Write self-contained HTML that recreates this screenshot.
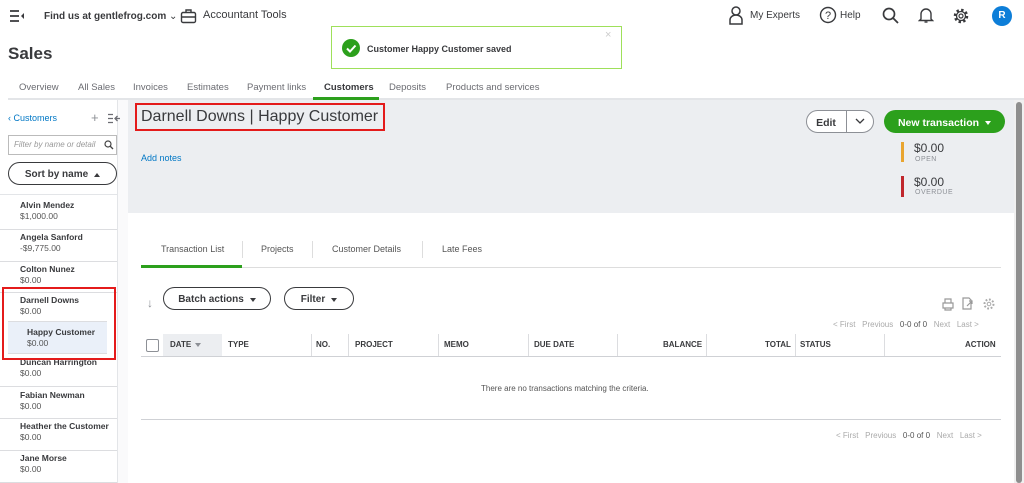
<!DOCTYPE html><html><head><meta charset="utf-8"><style>
*{box-sizing:border-box;margin:0;padding:0}
body{width:1024px;height:483px;overflow:hidden;background:#fff;font-family:"Liberation Sans",sans-serif;color:#393a3d;position:relative}
.a{position:absolute;white-space:nowrap}
.th{position:absolute;top:334px;height:22px;font-size:8px;font-weight:bold;line-height:22px;color:#393a3d}
.sep{position:absolute;top:334px;height:22px;width:1px;background:#dcdde0}
.c{position:absolute;left:0;width:117px;border-bottom:1px solid #dcdde0;font-size:8.5px;line-height:11px;padding:2px 0 0 20px}
.c b{display:block;color:#393a3d}
.c span{color:#555}
.pg{font-size:8px;color:#aaa}
.btn{display:flex;align-items:center;justify-content:center;line-height:12px;padding-top:2px}
.dn{display:inline-block;width:0;height:0;border-left:3.5px solid transparent;border-right:3.5px solid transparent;border-top:4px solid currentColor;margin-left:6px}
.up{display:inline-block;width:0;height:0;border-left:3.5px solid transparent;border-right:3.5px solid transparent;border-bottom:4px solid currentColor;margin-left:6px}
</style></head><body>
<svg class="a" style="left:9px;top:9px" width="16" height="14"><path d="M1 2h9M1 7h9M1 12h9" stroke="#393a3d" stroke-width="1.8"/><path d="M15 4l-3 3 3 3z" fill="#393a3d"/></svg>
<div class="a" style="left:44px;top:11px;font-size:10px;font-weight:bold">Find us at gentlefrog.com <span style="font-weight:normal">⌄</span></div>
<svg class="a" style="left:180px;top:8px" width="17" height="16"><rect x="1.5" y="4.5" width="14" height="10" rx="1.5" fill="none" stroke="#393a3d" stroke-width="1.4"/><path d="M6 4.5V2h5v2.5M1.5 9h14" fill="none" stroke="#393a3d" stroke-width="1.4"/></svg>
<div class="a" style="left:203px;top:9px;font-size:11px;color:#393a3d">Accountant Tools</div>
<svg class="a" style="left:729px;top:6px" width="14" height="19"><circle cx="7" cy="5" r="4" fill="none" stroke="#393a3d" stroke-width="1.5"/><path d="M1 18v-4a6 5 0 0112 0v4z" fill="none" stroke="#393a3d" stroke-width="1.5"/></svg>
<div class="a" style="left:750px;top:10px;font-size:10px">My Experts</div>
<svg class="a" style="left:819px;top:6px" width="18" height="18"><circle cx="9" cy="9" r="7.5" fill="none" stroke="#393a3d" stroke-width="1.4"/><text x="9" y="13" text-anchor="middle" font-size="11" font-family="Liberation Sans" fill="#393a3d">?</text></svg>
<div class="a" style="left:840px;top:10px;font-size:10px">Help</div>
<svg class="a" style="left:882px;top:7px" width="18" height="18"><circle cx="7" cy="7" r="5.5" fill="none" stroke="#393a3d" stroke-width="1.7"/><path d="M11 11l5 5" stroke="#393a3d" stroke-width="1.8"/></svg>
<svg class="a" style="left:918px;top:6px" width="16" height="18"><path d="M3 13V8a5 5 0 0110 0v5l1.5 1.5h-13z" fill="none" stroke="#393a3d" stroke-width="1.4"/><path d="M6.5 16h3" stroke="#393a3d" stroke-width="1.4"/></svg>
<svg class="a" style="left:952px;top:7px" width="18" height="18"><circle cx="9" cy="9" r="6" fill="none" stroke="#393a3d" stroke-width="2.5" stroke-dasharray="2.4 2.3"/><circle cx="9" cy="9" r="4.5" fill="none" stroke="#393a3d" stroke-width="1.3"/><circle cx="9" cy="9" r="2" fill="none" stroke="#393a3d" stroke-width="1.2"/></svg>
<div class="a" style="left:992px;top:6px;width:20px;height:20px;border-radius:50%;background:#0d7ed8;color:#fff;font-size:10px;font-weight:bold;text-align:center;line-height:20px">R</div>
<div class="a" style="left:8px;top:44px;font-size:17px;font-weight:bold;color:#393a3d">Sales</div>
<div class="a" style="left:331px;top:26px;width:291px;height:43px;border:1.5px solid #9ee05a;background:#fff"></div>
<div class="a" style="left:342px;top:39px;width:18px;height:18px;border-radius:50%;background:#2ca01c"></div>
<svg class="a" style="left:342px;top:39px" width="18" height="18"><path d="M5 9.5l3 3 5.5-6" fill="none" stroke="#fff" stroke-width="2"/></svg>
<div class="a" style="left:367px;top:44px;font-size:9px;font-weight:bold">Customer Happy Customer saved</div>
<div class="a" style="left:605px;top:29px;font-size:11px;color:#ccc">×</div>
<div class="a" style="top:82px;left:19px;font-size:9.5px;color:#6b6c72">Overview</div>
<div class="a" style="top:82px;left:78px;font-size:9.5px;color:#6b6c72">All Sales</div>
<div class="a" style="top:82px;left:133px;font-size:9.5px;color:#6b6c72">Invoices</div>
<div class="a" style="top:82px;left:187px;font-size:9.5px;color:#6b6c72">Estimates</div>
<div class="a" style="top:82px;left:247px;font-size:9.5px;color:#6b6c72">Payment links</div>
<div class="a" style="top:82px;left:324px;font-size:9.5px;font-weight:bold;color:#393a3d">Customers</div>
<div class="a" style="top:82px;left:389px;font-size:9.5px;color:#6b6c72">Deposits</div>
<div class="a" style="top:82px;left:446px;font-size:9.5px;color:#6b6c72">Products and services</div>
<div class="a" style="top:98px;left:8px;width:1016px;height:2px;background:#e3e5e8"></div>
<div class="a" style="top:97px;left:313px;width:66px;height:3px;background:#2ca01c"></div>
<div class="a" style="left:117px;top:100px;width:11px;height:383px;background:#fafafb;border-left:1px solid #e3e5e8"></div>
<div class="a" style="left:8px;top:113px;font-size:9px;color:#0077c5">‹ Customers</div>
<div class="a" style="left:91px;top:110px;font-size:13px;color:#8d9096">+</div>
<svg class="a" style="left:107px;top:113px" width="14" height="11"><path d="M1 1.5h5M1 5.5h5M1 9.5h5M13 5.5H8M10.5 3l-2.5 2.5 2.5 2.5" fill="none" stroke="#6b6c72" stroke-width="1.3"/></svg>
<div class="a" style="left:8px;top:135px;width:109px;height:20px;border:1px solid #bbb;font-size:8px;font-style:italic;color:#999;line-height:18px;padding-left:5px;overflow:hidden">Filter by name or detail</div>
<svg class="a" style="left:104px;top:140px" width="10" height="10"><circle cx="4" cy="4" r="3" fill="none" stroke="#444" stroke-width="1.2"/><path d="M6 6l3 3" stroke="#444" stroke-width="1.3"/></svg>
<div class="a btn" style="left:8px;top:162px;width:109px;height:23px;border:1.5px solid #393a3d;border-radius:12px;font-size:10px;font-weight:bold">Sort by name<span class="up"></span></div>
<div class="a" style="left:0;top:194px;width:117px;height:1px;background:#e3e5e8"></div>
<div class="c" style="top:198px;height:32px"><b>Alvin Mendez</b><span>$1,000.00</span></div>
<div class="c" style="top:230px;height:32px"><b>Angela Sanford</b><span>-$9,775.00</span></div>
<div class="c" style="top:262px;height:31px"><b>Colton Nunez</b><span>$0.00</span></div>
<div class="c" style="top:293px;height:28px;border-bottom:none"><b>Darnell Downs</b><span>$0.00</span></div>
<div class="a" style="left:8px;top:321px;width:99px;height:33px;background:#eaf0f9;border-top:1px solid #dcdde0;border-bottom:1px solid #dcdde0;font-size:8.5px;line-height:11px;padding:5px 0 0 19px"><b style="display:block">Happy Customer</b><span style="color:#555">$0.00</span></div>
<div class="c" style="top:356px;height:31px;padding-top:1px"><b>Duncan Harrington</b><span>$0.00</span></div>
<div class="c" style="top:388px;height:31px"><b>Fabian Newman</b><span>$0.00</span></div>
<div class="c" style="top:419px;height:32px"><b>Heather the Customer</b><span>$0.00</span></div>
<div class="c" style="top:451px;height:32px"><b>Jane Morse</b><span>$0.00</span></div>
<div class="a" style="left:2px;top:287px;width:114px;height:73px;border:2.5px solid #e41b1b"></div>
<div class="a" style="left:128px;top:100px;width:886px;height:113px;background:#eceef1"></div>
<div class="a" style="left:1014px;top:100px;width:10px;height:383px;background:#f0f0f0"></div>
<div class="a" style="left:1016px;top:102px;width:6px;height:381px;background:#8e8e8e;border-radius:3px"></div>
<div class="a" style="left:135px;top:103px;width:250px;height:28px;border:2.5px solid #e41b1b"></div>
<div class="a" style="left:141px;top:108px;font-size:16px;color:#393a3d">Darnell Downs | Happy Customer</div>
<div class="a" style="left:141px;top:153px;font-size:9px;color:#0077c5">Add notes</div>
<div class="a" style="left:806px;top:110px;width:68px;height:23px;border:1px solid #8d9096;border-radius:12px;background:#fff"></div>
<div class="a" style="left:846px;top:110px;width:1px;height:23px;background:#8d9096"></div>
<div class="a btn" style="left:806px;top:110px;width:40px;height:23px;font-size:10.5px;font-weight:bold">Edit</div>
<svg class="a" style="left:855px;top:118px" width="10" height="7"><path d="M1 1l4 4 4-4" fill="none" stroke="#393a3d" stroke-width="1.3"/></svg>
<div class="a btn" style="left:884px;top:110px;width:121px;height:23px;border-radius:12px;background:#2ca01c;color:#fff;font-size:10.5px;font-weight:bold">New transaction<span class="dn"></span></div>
<div class="a" style="left:901px;top:142px;width:3px;height:20px;background:#e9a530"></div>
<div class="a" style="left:914px;top:141px;font-size:12px">$0.00</div>
<div class="a" style="left:915px;top:156px;font-size:7px;color:#8d9096;letter-spacing:.5px">OPEN</div>
<div class="a" style="left:901px;top:176px;width:3px;height:21px;background:#c0272d"></div>
<div class="a" style="left:914px;top:175px;font-size:12px">$0.00</div>
<div class="a" style="left:915px;top:189px;font-size:7px;color:#8d9096;letter-spacing:.5px">OVERDUE</div>
<div class="a" style="left:161px;top:244px;font-size:9px;color:#555">Transaction List</div>
<div class="a" style="left:242px;top:241px;width:1px;height:17px;background:#ddd"></div>
<div class="a" style="left:261px;top:244px;font-size:9px;color:#555">Projects</div>
<div class="a" style="left:312px;top:241px;width:1px;height:17px;background:#ddd"></div>
<div class="a" style="left:332px;top:244px;font-size:9px;color:#555">Customer Details</div>
<div class="a" style="left:422px;top:241px;width:1px;height:17px;background:#ddd"></div>
<div class="a" style="left:442px;top:244px;font-size:9px;color:#555">Late Fees</div>
<div class="a" style="left:141px;top:267px;width:860px;height:1px;background:#ddd"></div>
<div class="a" style="left:141px;top:265px;width:101px;height:3px;background:#2ca01c"></div>
<div class="a" style="left:147px;top:296px;font-size:12px;color:#8d9096">↓</div>
<div class="a btn" style="left:163px;top:287px;width:108px;height:23px;border:1.5px solid #393a3d;border-radius:12px;font-size:10px;font-weight:bold">Batch actions<span class="dn"></span></div>
<div class="a btn" style="left:284px;top:287px;width:70px;height:23px;border:1.5px solid #393a3d;border-radius:12px;font-size:10px;font-weight:bold">Filter<span class="dn"></span></div>
<svg class="a" style="left:940px;top:297px" width="58" height="14"><path d="M3 6h10v5H3zM5 6V2h6v4M5 11v2h6v-2" fill="none" stroke="#999" stroke-width="1.2"/><path d="M23 1h6l2 2v9H23z" fill="none" stroke="#999" stroke-width="1.2"/><path d="M27 9l5-5M29 4h3v3" fill="none" stroke="#999" stroke-width="1.2"/><circle cx="49" cy="7" r="4.5" fill="none" stroke="#aaa" stroke-width="2" stroke-dasharray="1.8 1.7"/><circle cx="49" cy="7" r="1.8" fill="none" stroke="#aaa"/></svg>
<div class="a pg" style="left:833px;top:320px">&lt; First &nbsp; Previous &nbsp; <span style="color:#555">0-0 of 0</span> &nbsp; Next &nbsp; Last &gt;</div>
<div class="a" style="left:146px;top:339px;width:13px;height:13px;border:1px solid #8d9096;border-radius:2px;background:#fff"></div>
<div class="a" style="left:163px;top:334px;width:59px;height:22px;background:#eceef1"></div>
<div class="th" style="left:170px">DATE<span class="dn" style="color:#8d9096;margin-left:4px;vertical-align:middle"></span></div>
<div class="th" style="left:228px">TYPE</div>
<div class="th" style="left:316px">NO.</div>
<div class="th" style="left:355px">PROJECT</div>
<div class="th" style="left:444px">MEMO</div>
<div class="th" style="left:534px">DUE DATE</div>
<div class="th" style="left:663px">BALANCE</div>
<div class="th" style="left:765px">TOTAL</div>
<div class="th" style="left:800px">STATUS</div>
<div class="th" style="left:965px">ACTION</div>
<div class="sep" style="left:311px"></div><div class="sep" style="left:348px"></div><div class="sep" style="left:438px"></div><div class="sep" style="left:528px"></div><div class="sep" style="left:617px"></div><div class="sep" style="left:706px"></div><div class="sep" style="left:795px"></div><div class="sep" style="left:884px"></div>
<div class="a" style="left:141px;top:356px;width:860px;height:1px;background:#cfd1d5"></div>
<div class="a" style="left:481px;top:384px;font-size:8px;color:#555">There are no transactions matching the criteria.</div>
<div class="a" style="left:141px;top:419px;width:860px;height:1px;background:#cfd1d5"></div>
<div class="a pg" style="left:836px;top:431px">&lt; First &nbsp; Previous &nbsp; <span style="color:#555">0-0 of 0</span> &nbsp; Next &nbsp; Last &gt;</div>
</body></html>
